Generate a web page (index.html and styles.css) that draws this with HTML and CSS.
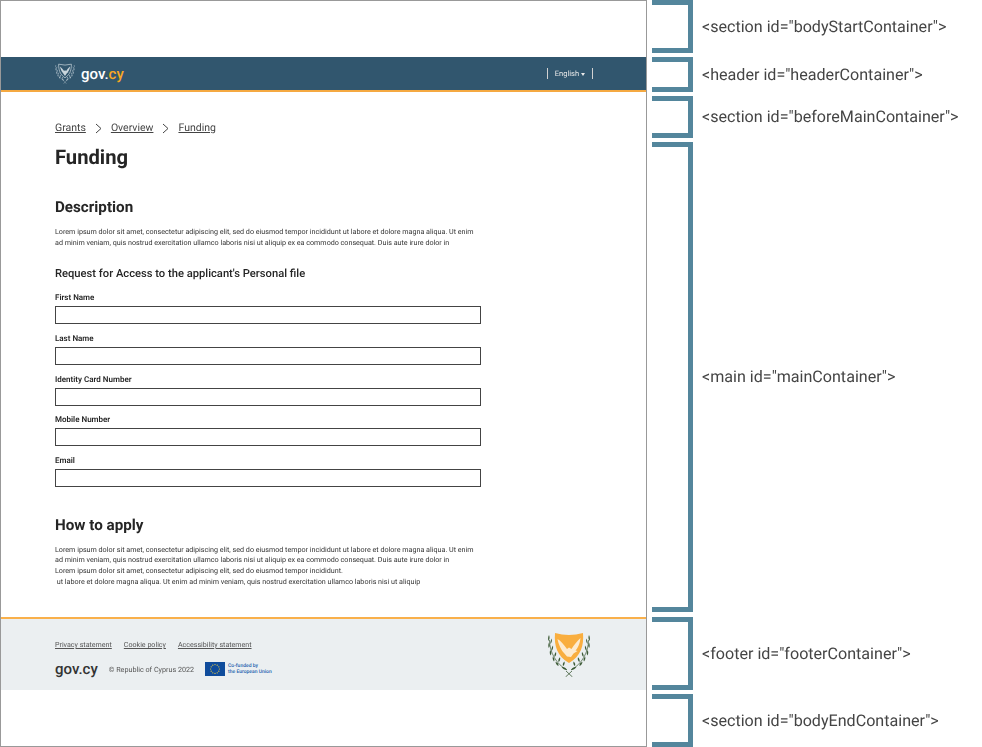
FILE: index.html
```html
<!DOCTYPE html>
<html lang="en">
<head>
    <meta charset="UTF-8">
    <meta name="viewport" content="width=device-width, initial-scale=1.0">
    <title>Page layout containers</title>
    <link rel="stylesheet" href="styles.css">
</head>
<body>

<svg class="sprites" width="0" height="0" aria-hidden="true">
    <symbol id="branch" viewBox="0 0 44 45">
        <path class="stem" d="M2.5 8C2.5 20 9 32 20 38"/>
        <path class="leaf" d="M1.5 9C0.8 7 1 5 2 3C2.8 5 2.8 7 1.5 9Z"/>
        <path class="leaf" d="M3.5 12C4.8 10.5 5 8.5 5 6.5C3.8 8 3.2 10 3.5 12Z"/>
        <path class="leaf" d="M1.8 16C1 14 1.2 12.5 2 10.5C3 12.5 3 14.5 1.8 16Z"/>
        <path class="leaf" d="M4.5 19C6 17.5 6.3 15.5 6 13.5C4.8 15 4.2 17 4.5 19Z"/>
        <path class="leaf" d="M3.5 23.5C2.5 21.5 2.6 20 3.2 18C4.5 20 4.7 22 3.5 23.5Z"/>
        <path class="leaf" d="M7.5 25C9 24 9.5 22 9 20C7.7 21.3 7.2 23 7.5 25Z"/>
        <path class="leaf" d="M7 29.5C5.6 28 5.5 26.3 5.8 24.5C7.4 26 8 28 7 29.5Z"/>
        <path class="leaf" d="M11.5 30C13 29 13.6 27 13 25.2C11.6 26.4 11 28.2 11.5 30Z"/>
        <path class="leaf" d="M11.5 34C9.5 33.2 8.7 31.6 8.5 29.8C10.5 30.4 11.8 32 11.5 34Z"/>
        <path class="leaf" d="M16 34C17.6 33 18 31.4 17.4 29.5C16 30.6 15.4 32.2 16 34Z"/>
        <path class="leaf" d="M20 38C17.6 38 15.8 36.8 14.6 35C17 34.8 19 36 20 38Z"/>
    </symbol>
</svg>

<div class="sheet">
    <div class="page">
        <section class="body-start"></section>

        <header class="site-header">
            <a class="brand" href="#">
                <svg class="emblem emblem-header" viewBox="0 0 44 45">
                    <use href="#branch" width="44" height="45"/>
                    <use href="#branch" width="44" height="45" transform="matrix(-1 0 0 1 44 0)"/>
                    <path class="cross" d="M19 39L25.5 45M25 39L18.5 45"/>
                    <path class="shield-outline" d="M8 2Q22 6 36 2C36 14 34 24 22 32C10 24 8 14 8 2Z"/>
                    <path class="eagle" d="M11 7C14 10 17 13 20 17L22 15.5L24.5 17C27 13 30 10 33 7C33 11 31 16 28.5 18.5L30 19L26.5 21.5L22 28L17 21C14 18 12 12 11 7Z"/>
                </svg>
                <span class="wordmark">gov.<span class="wordmark-cy">cy</span></span>
            </a>
            <div class="lang-switch">English <span class="caret"></span></div>
        </header>

        <section class="before-main">
            <nav class="crumbs">
                <a href="#">Grants</a>
                <svg class="crumb-sep" viewBox="0 0 7 11"><path d="M1 1L6 5.5L1 10"/></svg>
                <a href="#">Overview</a>
                <svg class="crumb-sep" viewBox="0 0 7 11"><path d="M1 1L6 5.5L1 10"/></svg>
                <a href="#">Funding</a>
            </nav>
        </section>

        <main class="main">
            <h1>Funding</h1>

            <h2>Description</h2>
            <p>Lorem ipsum dolor sit amet, consectetur adipiscing elit, sed do eiusmod tempor incididunt ut labore et dolore magna aliqua. Ut enim<br>ad minim veniam, quis nostrud exercitation ullamco laboris nisi ut aliquip ex ea commodo consequat. Duis aute irure dolor in</p>

            <h3>Request for Access to the applicant's Personal file</h3>
            <form class="form">
                <label for="firstName">First Name</label>
                <input type="text" id="firstName">
                <label for="lastName">Last Name</label>
                <input type="text" id="lastName">
                <label for="idNumber">Identity Card Number</label>
                <input type="text" id="idNumber">
                <label for="mobile">Mobile Number</label>
                <input type="text" id="mobile">
                <label for="email">Email</label>
                <input type="text" id="email">
            </form>

            <h2 class="apply-title">How to apply</h2>
            <p class="apply-text">Lorem ipsum dolor sit amet, consectetur adipiscing elit, sed do eiusmod tempor incididunt ut labore et dolore magna aliqua. Ut enim<br>ad minim veniam, quis nostrud exercitation ullamco laboris nisi ut aliquip ex ea commodo consequat. Duis aute irure dolor in<br>Lorem ipsum dolor sit amet, consectetur adipiscing elit, sed do eiusmod tempor incididunt.<br>&nbsp;ut labore et dolore magna aliqua. Ut enim ad minim veniam, quis nostrud exercitation ullamco laboris nisi ut aliquip</p>
        </main>

        <footer class="site-footer">
            <div class="footer-left">
                <div class="footer-links">
                    <a href="#">Privacy statement</a>
                    <a href="#">Cookie policy</a>
                    <a href="#">Accessibility statement</a>
                </div>
                <div class="footer-brand">
                    <span class="footer-wordmark">gov.cy</span>
                    <span class="copyright">© Republic of Cyprus 2022</span>
                    <svg class="eu-flag" viewBox="0 0 20 14">
                        <rect width="20" height="14" fill="#0f4c9c"/>
                        <g fill="#f6d33c">
                            <circle cx="10" cy="2.6" r=".6"/><circle cx="12.2" cy="3.2" r=".6"/><circle cx="13.8" cy="4.8" r=".6"/>
                            <circle cx="14.4" cy="7" r=".6"/><circle cx="13.8" cy="9.2" r=".6"/><circle cx="12.2" cy="10.8" r=".6"/>
                            <circle cx="10" cy="11.4" r=".6"/><circle cx="7.8" cy="10.8" r=".6"/><circle cx="6.2" cy="9.2" r=".6"/>
                            <circle cx="5.6" cy="7" r=".6"/><circle cx="6.2" cy="4.8" r=".6"/><circle cx="7.8" cy="3.2" r=".6"/>
                        </g>
                    </svg>
                    <span class="eu-text">Co-funded by<br>the European Union</span>
                </div>
            </div>
            <svg class="emblem emblem-footer" viewBox="0 0 44 45">
                <use href="#branch" width="44" height="45"/>
                <use href="#branch" width="44" height="45" transform="matrix(-1 0 0 1 44 0)"/>
                <path class="cross" d="M19 39L25.5 45M25 39L18.5 45"/>
                <path class="shield" d="M8 1Q22 5 36 1C37 14 34 24 22 31C10 24 7 14 8 1Z"/>
                <path class="eagle" d="M10.5 7C14 9 17 13 20 17L22 15.5L24.5 17C27 13 30 9 33.5 6C33 11 31 16 28.5 18.5L30.5 19L26.5 21.5L24 25L20 24.5L17 21C14 18 11.5 12 10.5 7Z"/>
            </svg>
        </footer>

        <section class="body-end"></section>
    </div>

    <div class="notes">
        <div class="note note-start"><span class="bracket"></span><code>&lt;section id="bodyStartContainer"&gt;</code></div>
        <div class="note note-header"><span class="bracket"></span><code>&lt;header id="headerContainer"&gt;</code></div>
        <div class="note note-before"><span class="bracket"></span><code>&lt;section id="beforeMainContainer"&gt;</code></div>
        <div class="note note-main"><span class="bracket"></span><code>&lt;main id="mainContainer"&gt;</code></div>
        <div class="note note-footer"><span class="bracket"></span><code>&lt;footer id="footerContainer"&gt;</code></div>
        <div class="note note-end"><span class="bracket"></span><code>&lt;section id="bodyEndContainer"&gt;</code></div>
    </div>
</div>

</body>
</html>
```

FILE: styles.css
```css
html, body {
    margin: 0;
    padding: 0;
}
body {
    font-family: Roboto, "Liberation Sans", sans-serif;
    background-color: white;
    color: #272525;
    overflow: hidden;
    text-rendering: geometricPrecision;
}
.sprites {
    position: absolute;
}
.sheet {
    display: flex;
    width: 982px;
    height: 747px;
}

/* left side, the page mockup */
.page {
    width: 647px;
    height: 747px;
    box-sizing: border-box;
    border: 1px solid #999;
    display: flex;
    flex-direction: column;
}
.body-start {
    height: 56px;
    flex: none;
}
.site-header {
    height: 33px;
    flex: none;
    background-color: #31566e;
    border-bottom: 2px solid #f5a941;
    display: flex;
    align-items: center;
    justify-content: space-between;
    padding: 0 53px 0 54px;
}
.brand {
    display: flex;
    align-items: center;
    gap: 6px;
    text-decoration: none;
}
.wordmark {
    font-size: 15px;
    font-weight: 500;
    color: white;
}
.wordmark-cy {
    color: #f7a823;
}
.leaf {
    fill: currentColor;
}
.stem {
    fill: none;
    stroke: currentColor;
    stroke-width: 0.7;
}
.emblem-header {
    width: 20px;
    height: 21px;
    color: #c3d0d8;
}
.emblem-header .shield-outline {
    fill: #31566e;
    stroke: #cfdae0;
    stroke-width: 1.5;
}
.emblem-header .eagle {
    fill: #c9d5dc;
}
.lang-switch {
    font-size: 7.5px;
    color: #e3eaee;
    height: 11px;
    line-height: 11px;
    padding: 0 7px;
    border-left: 1px solid #c7d3da;
    border-right: 1px solid #c7d3da;
    filter: grayscale(1);
}
.caret {
    display: inline-block;
    vertical-align: middle;
    border-left: 2.5px solid transparent;
    border-right: 2.5px solid transparent;
    border-top: 3px solid #e3eaee;
}
.before-main {
    height: 44px;
    flex: none;
    padding: 0 54px;
    display: flex;
    align-items: flex-end;
}
.crumbs {
    display: flex;
    align-items: center;
    font-size: 10.5px;
    line-height: 14px;
    margin-bottom: 1px;
    filter: grayscale(1);
}
.crumbs a {
    color: #444;
}
.crumb-sep {
    width: 7px;
    height: 11px;
    margin: 0 9px 0 9px;
    fill: none;
    stroke: #444;
    stroke-width: 1;
}
.main {
    flex: none;
    height: 481px;
    box-sizing: border-box;
    padding: 8px 54px 0;
    filter: grayscale(1);
}
h1 {
    font-size: 20.2px;
    line-height: 26px;
    font-weight: 700;
    margin: 0 0 27px;
}
h2 {
    font-size: 15.2px;
    line-height: 20px;
    font-weight: 700;
    margin: 0 0 10px;
}
h3 {
    font-size: 11.2px;
    line-height: 14px;
    font-weight: 500;
    margin: 19px 0 12px;
}
p {
    font-size: 7.17px;
    line-height: 10.5px;
    margin: 0;
    color: #333;
}
.apply-text {
    line-height: 10.7px;
}
.form {
    width: 426px;
}
label {
    display: block;
    font-size: 8px;
    line-height: 10px;
    font-weight: 600;
    margin-bottom: 3px;
}
input[type="text"] {
    display: block;
    width: 100%;
    height: 18px;
    box-sizing: border-box;
    border: 1px solid #444;
    background-color: white;
    padding: 0;
    margin: 0 0 9.8px;
    outline: none;
}
.apply-title {
    margin-top: 27.5px;
}
.site-footer {
    flex: none;
    height: 73px;
    box-sizing: border-box;
    background-color: #ebeff1;
    border-top: 2px solid #f9b04b;
    display: flex;
    justify-content: space-between;
    padding: 13px 54px 0;
}
.footer-links {
    display: flex;
    gap: 12px;
    font-size: 7.1px;
    line-height: 12px;
    margin-top: 7px;
    filter: grayscale(1);
}
.footer-links a {
    color: #555;
}
.footer-brand {
    display: flex;
    align-items: center;
    margin-top: 9px;
}
.footer-wordmark {
    font-size: 15px;
    font-weight: 500;
    color: #333;
}
.copyright {
    font-size: 7.2px;
    color: #555;
    margin: 0 11px 0 11px;
    filter: grayscale(1);
}
.eu-flag {
    width: 20px;
    height: 14px;
}
.eu-text {
    font-size: 5px;
    line-height: 6px;
    font-weight: 500;
    color: #1d5fae;
    margin-left: 3px;
}
.emblem-footer {
    width: 44px;
    height: 45px;
    margin-right: 1px;
    color: #3c5a36;
}
.cross {
    fill: none;
    stroke: currentColor;
    stroke-width: 0.8;
}
.emblem-footer .shield {
    fill: #f9ae3f;
}
.emblem-footer .eagle {
    fill: #fdebd0;
}
.body-end {
    flex: 1;
}

/* right side, the brackets and their tags */
.notes {
    flex: none;
    width: 335px;
    box-sizing: border-box;
    padding-left: 5px;
    display: flex;
    flex-direction: column;
}
.note {
    display: flex;
    align-items: center;
    gap: 9px;
    flex: none;
}
.note code {
    font-family: Roboto, "Liberation Sans", sans-serif;
    font-size: 16.1px;
    color: #444;
    white-space: nowrap;
    filter: grayscale(1);
}
.bracket {
    display: block;
    width: 41px;
    height: 100%;
    box-sizing: border-box;
    border: 5px solid #54869c;
    border-left: none;
}
.note-start { height: 53px; }
.note-header { height: 35px; margin-top: 4px; }
.note-before { height: 42px; margin-top: 4px; }
.note-main { height: 470px; margin-top: 4px; }
.note-footer { height: 73px; margin-top: 5px; }
.note-end { height: 53px; margin-top: 4px; }
.note-before code, .note-main code { margin-bottom: 2px; }
```
